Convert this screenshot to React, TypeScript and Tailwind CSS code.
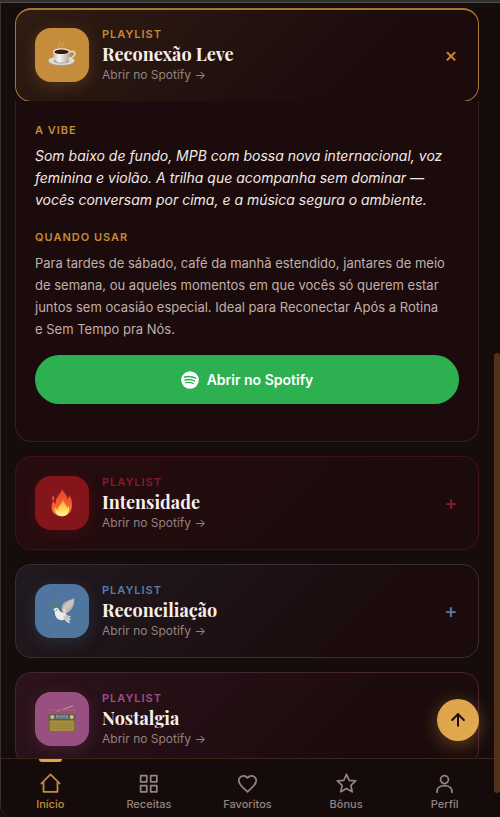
import React, { useState } from 'react';
import { ArrowUp } from 'lucide-react';

interface Playlist {
  id: string;
  title: string;
  icon: React.ReactNode;
  card: string;
  openBorder: string;
  tile: string;
  accent: string;
  vibe: string;
  whenToUse: string;
}

const CoffeeIcon = () => (
  <svg viewBox="0 0 28 28" className="w-7 h-7" aria-hidden="true">
    <defs>
      <linearGradient id="cup" x1="0" x2="1">
        <stop offset="0" stopColor="#b9b6b1" />
        <stop offset="0.35" stopColor="#f7f5f1" />
        <stop offset="1" stopColor="#aaa7a2" />
      </linearGradient>
    </defs>
    <path d="M11 6c-2-2 3-2 1-5M14 6c-1-2 3-2 1-4" fill="none" stroke="#d8c9a8" strokeWidth="1.2" strokeLinecap="round" opacity="0.4" />
    <ellipse cx="13.5" cy="20.5" rx="13" ry="4.8" fill="#a19d97" />
    <ellipse cx="13.5" cy="19.6" rx="13" ry="4.5" fill="#dedbd5" />
    <ellipse cx="13.5" cy="20" rx="8" ry="2.6" fill="#a9a59e" />
    <path d="M21 11c5-1.500 7 0 5.500 3-1 2-3.500 3-6.500 3" fill="none" stroke="#dcd9d3" strokeWidth="1.6" />
    <path d="M5 10.500c0 5 2 10 5.500 11h6c3.500-1 5.500-6 5.500-11z" fill="url(#cup)" />
    <ellipse cx="13.500" cy="10.500" rx="8.500" ry="3.200" fill="#efede8" />
    <ellipse cx="13.500" cy="10.800" rx="7.200" ry="2.300" fill="#3a1a0d" />
  </svg>
);

const FireIcon = () => (
  <svg viewBox="0 0 28 28" className="w-7 h-7" aria-hidden="true">
    <defs>
      <linearGradient id="flame" x1="0" y1="0" x2="0" y2="1">
        <stop offset="0" stopColor="#e8402a" />
        <stop offset="0.6" stopColor="#f4622a" />
        <stop offset="1" stopColor="#fba23a" />
      </linearGradient>
      <linearGradient id="flameCore" x1="0" y1="0" x2="0" y2="1">
        <stop offset="0" stopColor="#fb9a35" />
        <stop offset="0.7" stopColor="#ffe268" />
        <stop offset="1" stopColor="#fff6b8" />
      </linearGradient>
    </defs>
    <path d="M14 0c1 3 5 5 5.500 10 1-.5 1.500-2 1.200-4C23 8 24.500 12 24 17c-.5 6-4.500 10.500-10 10.500S3.500 23.500 3.500 18c0-3 1-5 2-6.500.3 2 1 3 2 3.500-.5-7 5-9 6.500-15z" fill="url(#flame)" />
    <path d="M4.500 11c-1.500-2 .2-3.800 1.500-5-.5 2 .8 3 .3 5z" fill="#e8502a" />
    <path d="M15 10c0 4 4 5.500 4.200 9.500C20 18.500 20.500 17.500 20.500 16c2 5-.5 11-6.500 11-5 0-8-4-6.500-9 .5 1.500 1.500 2.500 2.500 3 0-5 4.500-6 5-11z" fill="url(#flameCore)" />
  </svg>
);

const DoveIcon = () => (
  <svg viewBox="0 0 28 28" className="w-7 h-7" aria-hidden="true">
    <path d="M7 11c-1-3 0-6 2-9 0 3 0 6-1 9zM6 9C4 8.500 2.500 7 2 5c2 0 3.500 1.500 4 4zM5 10c-2 .5-3.500 0-4.500-1C2 8 4 8.500 5 10z" fill="#4f8a60" />
    <path d="M14 14c-1-4 1-8 4-9.500C21 3 24 2.500 26 1c.5 4 0 8-2.500 11-1.500 2-4 4-6.500 5z" fill="#b9b5b0" />
    <path d="M15 14c0-4 2-7 5-8.500 2-1 4-2 5.500-3-1 3-2 6-4 8.500-1.500 2-3 3.500-5 4.500z" fill="#d9d6d1" />
    <path d="M18 6l-1 6M21 5l-3 8M24 4l-5 10" stroke="#a5a19e" strokeWidth="0.6" />
    <path d="M6 12c2-2 4-1.500 5 1 1 2 3 2.500 5.500 2.500C19 17 19 20 17 22c-3 2.500-8 1-9.500-3C6.500 16 7 14 6.500 13.500L5 13z" fill="#eeecea" />
    <path d="M15 20l3-2.500c2 1 4 1.500 5 2l-1.500 1.500 1.500 1.500-1.800.8 1 3.200C19 25.500 17 24 15 20z" fill="#d4d1cf" />
    <path d="M17 20l4.500 4M18 19l4 2" stroke="#9f9b99" strokeWidth="0.6" />
    <circle cx="8.300" cy="13" r="0.600" fill="#25201e" />
  </svg>
);

const RadioIcon = () => (
  <svg viewBox="0 0 28 28" className="w-7 h-7" aria-hidden="true">
    <path d="M9 6.500L25 .800" stroke="#b996a8" strokeWidth="1.100" />
    <path d="M1.500 10V6.500Q1.500 5 3 5h22q1.500 0 1.500 1.500V10" fill="none" stroke="#b05a68" strokeWidth="1.300" />
    <rect x="0.500" y="9" width="27" height="18" rx="1" fill="#7f6a31" />
    <rect x="0.500" y="9" width="27" height="6" fill="#595e64" />
    <rect x="8" y="10" width="12" height="3.500" fill="#89939a" />
    <path d="M10 10v3.500M12 10v3.500M14 10v3.500M16 10v3.500M18 10v3.500" stroke="#444b50" strokeWidth="0.500" />
    <circle cx="4.300" cy="12" r="2" fill="#d7bf68" />
    <circle cx="23.700" cy="12" r="2" fill="#d7bf68" />
    <rect x="2.500" y="16" width="23" height="9.500" fill="#a58b40" stroke="#b3984a" strokeWidth="0.600" />
    <path d="M3 18.500h22M3 21h22M3 23.500h22" stroke="#987f39" strokeWidth="0.400" />
  </svg>
);

const SpotifyIcon = () => (
  <svg viewBox="0 0 18 18" className="w-[18px] h-[18px]" aria-hidden="true">
    <circle cx="9" cy="9" r="8.800" fill="#fff" />
    <g fill="none" stroke="#2db04f" strokeLinecap="round">
      <path d="M3.500 6.100C7 5.200 11.500 5.500 14.600 7.200" strokeWidth="1.500" />
      <path d="M4 9C7 8.200 10.800 8.500 13.500 10" strokeWidth="1.300" />
      <path d="M4.400 11.700C7 11.100 10 11.300 12.500 12.700" strokeWidth="1.100" />
    </g>
  </svg>
);

const playlists: Playlist[] = [
  {
    id: 'reconexao',
    title: 'Reconexão Leve',
    icon: <CoffeeIcon />,
    card: 'from-[#2f1c12] border-[#a9762f]',
    openBorder: 'border-[#38201a]',
    tile: 'bg-[#c58d3b] shadow-[0_4px_16px_#c58d3b40]',
    accent: 'text-[#c58a38]',
    vibe: 'Som baixo de fundo, MPB com bossa nova internacional, voz feminina e violão. A trilha que acompanha sem dominar — vocês conversam por cima, e a música segura o ambiente.',
    whenToUse:
      'Para tardes de sábado, café da manhã estendido, jantares de meio de semana, ou aqueles momentos em que vocês só querem estar juntos sem ocasião especial. Ideal para Reconectar Após a Rotina e\u00a0Sem Tempo pra Nós.',
  },
  {
    id: 'intensidade',
    title: 'Intensidade',
    icon: <FireIcon />,
    card: 'from-[#280c10] border-[#431017]',
    openBorder: 'border-[#431017]',
    tile: 'bg-[#84151b] shadow-[0_4px_16px_#84151b40]',
    accent: 'text-[#861b2a]',
    vibe: 'Batida lenta, graves quentes e vozes próximas.',
    whenToUse: 'Para noites a dois.',
  },
  {
    id: 'reconciliacao',
    title: 'Reconciliação',
    icon: <DoveIcon />,
    card: 'from-[#201a20] border-[#362d35]',
    openBorder: 'border-[#362d35]',
    tile: 'bg-[#50759e] shadow-[0_4px_16px_#50759e40]',
    accent: 'text-[#587ba9]',
    vibe: 'Piano leve e letras de recomeço.',
    whenToUse: 'Para depois de uma conversa difícil.',
  },
  {
    id: 'nostalgia',
    title: 'Nostalgia',
    icon: <RadioIcon />,
    card: 'from-[#2c131c] border-[#45252e]',
    openBorder: 'border-[#45252e]',
    tile: 'bg-[#985081] shadow-[0_4px_16px_#98508140]',
    accent: 'text-[#a04d87]',
    vibe: 'As músicas do começo da história de vocês.',
    whenToUse: 'Para lembrar juntos.',
  },
];

const navItems = [
  { label: 'Início', path: 'M1.500 12L12 1.500l10.500 10.500M4 10v11.500h16V10', active: true },
  { label: 'Receitas', path: 'M3 3h7v7H3zM14.500 3h7v7h-7zM3 14.500h7v7H3zM14.500 14.500h7v7h-7z', active: false },
  { label: 'Favoritos', path: 'M12 21.500l-1.500-1.300C5 15.500 2 12.500 2 8.700A5.300 5.300 0 0 1 7.300 3.300c1.800 0 3.600.9 4.700 2.300 1.100-1.400 2.900-2.300 4.700-2.300A5.300 5.300 0 0 1 22 8.700c0 3.800-3 6.800-8.500 11.500z', active: false },
  { label: 'Bônus', path: 'M12 1.500l3 6.800 7.500.8-5.500 5 1.500 7.400L12 17.800l-6.500 3.700L7 14.100l-5.500-5 7.500-.8z', active: false },
  { label: 'Perfil', path: 'M16.500 7.500a4.500 4.500 0 1 1-9 0 4.500 4.500 0 0 1 9 0M3.500 22v-1c0-4 3.500-6.500 8.500-6.500s8.500 2.500 8.500 6.500v1', active: false },
];

interface PlaylistCardProps {
  playlist: Playlist;
  open: boolean;
  onToggle: () => void;
}

const PlaylistCard: React.FC<PlaylistCardProps> = ({ playlist, open, onToggle }) => {
  const { id, title, icon, card, openBorder, tile, accent, vibe, whenToUse } = playlist;
  const label = `text-[11px] leading-4 tracking-[1px] uppercase ${accent}`;

  return (
    <section>
      <button
        type="button"
        onClick={onToggle}
        aria-expanded={open}
        aria-controls={`${id}-panel`}
        className={`w-full flex items-center gap-[13px] rounded-2xl border px-[19px] py-[17px] text-left bg-linear-135 to-[#1b0b0c] to-75% ${card} ${open ? 'border-t-2 pt-4' : ''}`}
      >
        <span className={`w-[54px] h-[54px] shrink-0 rounded-2xl flex items-center justify-center ${tile}`}>{icon}</span>
        <span className="flex-1 min-w-0 flex flex-col">
          <span className={`${label} font-semibold`}>Playlist</span>
          <span className="font-['Playfair_Display','Liberation_Serif',serif] text-lg leading-6 font-bold text-[#f8efeb]">{title}</span>
          <span className="text-xs leading-[18px] text-[#94827f]">Abrir no Spotify →</span>
        </span>
        <span className={`w-4 flex justify-center text-xl leading-6 font-medium ${accent}`}>{open ? '×' : '+'}</span>
      </button>

      {open && (
        <div id={`${id}-panel`} className={`-mt-px rounded-b-2xl border border-t-0 px-[19px] pt-[21px] pb-[37px] bg-[#1b0b0c] ${openBorder}`}>
          <h3 className={`${label} font-semibold`}>A vibe</h3>
          <p className="mt-[7px] text-sm leading-[22px] italic text-[#f3e9e4]">{vibe}</p>
          <h3 className={`${label} font-semibold mt-[18px]`}>Quando usar</h3>
          <p className="mt-[7px] text-[13px] leading-[22px] text-[#c0b0ab]">{whenToUse}</p>
          <a href="#spotify" className="mt-[15px] h-[49px] rounded-full bg-[#2db04f] flex items-center justify-center gap-2 text-sm font-semibold text-white">
            <SpotifyIcon />
            Abrir no Spotify
          </a>
        </div>
      )}
    </section>
  );
};

export default function App() {
  const [openId, setOpenId] = useState<string | null>('reconexao');

  return (
    <div className="h-screen flex flex-col overflow-hidden bg-[#170c0c] font-[Inter,'Liberation_Sans',sans-serif]">
      <div className="h-[3px] shrink-0 bg-[#333130] border-b border-[#514d4b]" />
      <div className="flex-1 min-h-0 flex">
        <div className="flex-1 min-w-0 flex flex-col border-l border-[#373031] rounded-bl-xl">
          <div className="relative flex-1 min-h-0">
            <main className="h-full overflow-hidden pl-[14px] pr-[15px] pt-[5px] flex flex-col gap-[14px]">
              {playlists.map(p => (
                <PlaylistCard key={p.id} playlist={p} open={openId === p.id} onToggle={() => setOpenId(openId === p.id ? null : p.id)} />
              ))}
            </main>
            <button
              type="button"
              aria-label="Voltar ao topo"
              className="absolute right-[15px] bottom-[17px] w-[42px] h-[42px] rounded-full bg-linear-135 from-[#dda347] to-[#e2ab52] text-[#1b0e0a] flex items-center justify-center shadow-[0_4px_18px_#d49a4066]"
            >
              <ArrowUp size={20} strokeWidth={2.4} />
            </button>
          </div>

          <nav className="shrink-0 grid grid-cols-5 border-t border-[#3b2415] bg-[#150b0b] rounded-bl-xl">
            {navItems.map(item => (
              <a
                key={item.label}
                href={`#${item.label.toLowerCase()}`}
                className={`relative flex flex-col items-center gap-0.5 pt-[14px] pb-[5px] text-[11px] leading-4 font-medium ${item.active ? 'text-[#c58d3b]' : 'text-[#938481]'}`}
              >
                {item.active && <span className="absolute top-0 w-[23px] h-[3px] rounded-b bg-[#dfa448]" />}
                <svg viewBox="0 0 24 24" className="w-[21px] h-[21px]" fill="none" stroke="currentColor" strokeWidth="2" strokeLinejoin="round" strokeLinecap="round" aria-hidden="true">
                  <path d={item.path} />
                </svg>
                {item.label}
              </a>
            ))}
          </nav>
        </div>

        {/* Scroll track */}
        <div className="w-[6px] shrink-0 flex flex-col bg-[#150b0b]">
          <div className="basis-[43%]" />
          <div className="basis-[54%] rounded-full bg-[#50331a]" />
        </div>
      </div>
    </div>
  );
}
